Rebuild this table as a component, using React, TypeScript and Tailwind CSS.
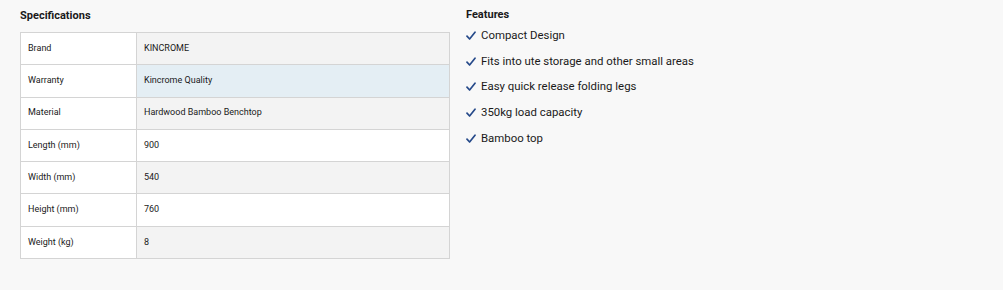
const specs: { label: string; value: string; bg: string }[] = [
  { label: "Brand", value: "KINCROME", bg: "bg-[#f3f3f3]" },
  { label: "Warranty", value: "Kincrome Quality", bg: "bg-[#e4eef4]" },
  { label: "Material", value: "Hardwood Bamboo Benchtop", bg: "bg-[#f3f3f3]" },
  { label: "Length (mm)", value: "900", bg: "bg-white" },
  { label: "Width (mm)", value: "540", bg: "bg-[#f3f3f3]" },
  { label: "Height (mm)", value: "760", bg: "bg-white" },
  { label: "Weight (kg)", value: "8", bg: "bg-[#f3f3f3]" },
];

const features = [
  "Compact Design",
  "Fits into ute storage and other small areas",
  "Easy quick release folding legs",
  "350kg load capacity",
  "Bamboo top",
];

function Tick() {
  return (
    <svg viewBox="0 0 10 10" className="w-[10px] h-[10px] shrink-0" fill="none">
      <polyline points="1,5.2 3.6,8 9,1.2" stroke="#264a8a" strokeWidth="1.7" strokeLinecap="round" strokeLinejoin="round" />
    </svg>
  );
}

export default function App() {
  return (
    <div className="w-[1003px] h-[290px] bg-[#f8f8f8] text-[#1a1a1a] font-['Roboto',sans-serif] flex gap-4 px-5">
      {/* Specifications */}
      <div className="w-[430px] shrink-0">
        <h3 className="text-[11px] font-bold h-[32px] pt-[9px] leading-[14px]">Specifications</h3>
        <div className="border border-[#d4d4d4] border-b-0">
          {specs.map((s) => (
            <div key={s.label} className="flex h-[32.3px] border-b border-[#d4d4d4] text-[9px]">
              <div className="w-[116px] shrink-0 bg-white border-r border-[#d4d4d4] flex items-center pl-[7px]">
                {s.label}
              </div>
              <div className={`flex-1 flex items-center pl-[7px] ${s.bg}`}>{s.value}</div>
            </div>
          ))}
        </div>
      </div>

      {/* Features */}
      <div className="pt-[8px]">
        <h3 className="text-[11px] font-bold leading-[14px]">Features</h3>
        <ul className="mt-[6px] flex flex-col gap-[10px]">
          {features.map((f) => (
            <li key={f} className="flex items-center gap-[5px] text-[11.4px] leading-[15.7px]">
              <Tick />
              <span>{f}</span>
            </li>
          ))}
        </ul>
      </div>
    </div>
  );
}
